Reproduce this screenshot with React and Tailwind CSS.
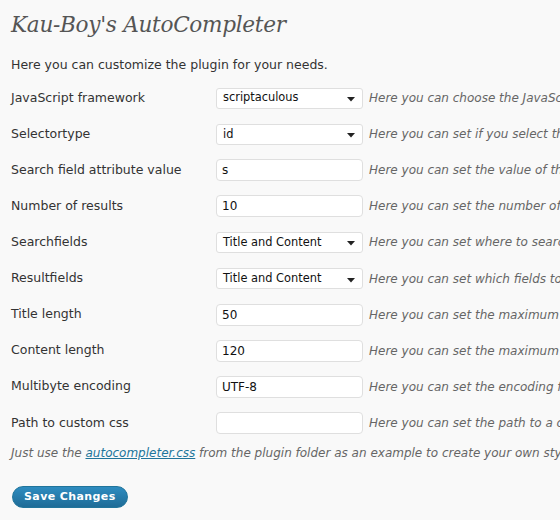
import React from 'react';

const rows = [
  { label: "JavaScript framework", type: "select", value: "scriptaculous", help: "Here you can choose the JavaScript framework you want to use" },
  { label: "Selectortype", type: "select", value: "id", help: "Here you can set if you select the search field by id or by name" },
  { label: "Search field attribute value", type: "input", value: "s", help: "Here you can set the value of the attribute" },
  { label: "Number of results", type: "input", value: "10", help: "Here you can set the number of results" },
  { label: "Searchfields", type: "select", value: "Title and Content", help: "Here you can set where to search for the results" },
  { label: "Resultfields", type: "select", value: "Title and Content", help: "Here you can set which fields to display" },
  { label: "Title length", type: "input", value: "50", help: "Here you can set the maximum title length" },
  { label: "Content length", type: "input", value: "120", help: "Here you can set the maximum content length" },
  { label: "Multibyte encoding", type: "input", value: "UTF-8", help: "Here you can set the encoding for multibyte" },
  { label: "Path to custom css", type: "input", value: "", help: "Here you can set the path to a custom css file" },
];

function Field({ row }) {
  if (row.type === "select") {
    return (
      <div className="w-[147px] h-[21px] bg-white border border-[#dfdfdf] rounded-[3px] flex items-center pl-[6px] pr-[7px] text-[11.4px] text-[#111] shrink-0">
        <span className="flex-1">{row.value}</span>
        <svg width="8" height="5" viewBox="0 0 8 5" className="mt-[3px]">
          <path d="M0 0h8L4 4.5z" fill="#222" />
        </svg>
      </div>
    );
  }
  return (
    <div className="w-[147px] h-[22px] bg-white border border-[#dfdfdf] rounded-[4px] flex items-center px-[5px] text-[12px] text-[#111] shrink-0">
      {row.value}
    </div>
  );
}

export default function App() {
  return (
    <div className="w-[560px] h-[520px] overflow-hidden bg-[#f9f9f9] text-[#333] font-['DejaVu_Sans',Verdana,sans-serif] text-[12.5px]">
      <h2 className="pl-[11px] pt-[9px] h-[44px] font-['DejaVu_Serif',Georgia,serif] italic text-[21.6px] text-[#555] whitespace-nowrap tracking-[-0.3px]">
        Kau-Boy's AutoCompleter
      </h2>
      <p className="pl-[11px] mt-[12px] h-[20px] whitespace-nowrap">Here you can customize the plugin for your needs.</p>
      <div className="flex flex-col mt-[4px]">
        {rows.map((row) => (
          <div key={row.label} className="flex items-center h-[36.1px] whitespace-nowrap">
            <div className="w-[216px] pl-[11px] shrink-0">{row.label}</div>
            <Field row={row} />
            <div className="pl-[6px] italic text-[#666] text-[12px]">{row.help}</div>
          </div>
        ))}
      </div>
      <p className="pl-[11px] mt-[3px] italic text-[#666] text-[12px] whitespace-nowrap">
        Just use the <a href="#" className="text-[#21759b] underline">autocompleter.css</a> from the plugin folder as an example to create your own style
      </p>
      <div className="pl-[12px] mt-[24px]">
        <button className="h-[22px] px-[11px] rounded-full border border-[#21759b] bg-gradient-to-b from-[#2e8cc0] to-[#1f6c97] text-white font-bold text-[11px] tracking-[0.4px]">
          Save Changes
        </button>
      </div>
    </div>
  );
}
